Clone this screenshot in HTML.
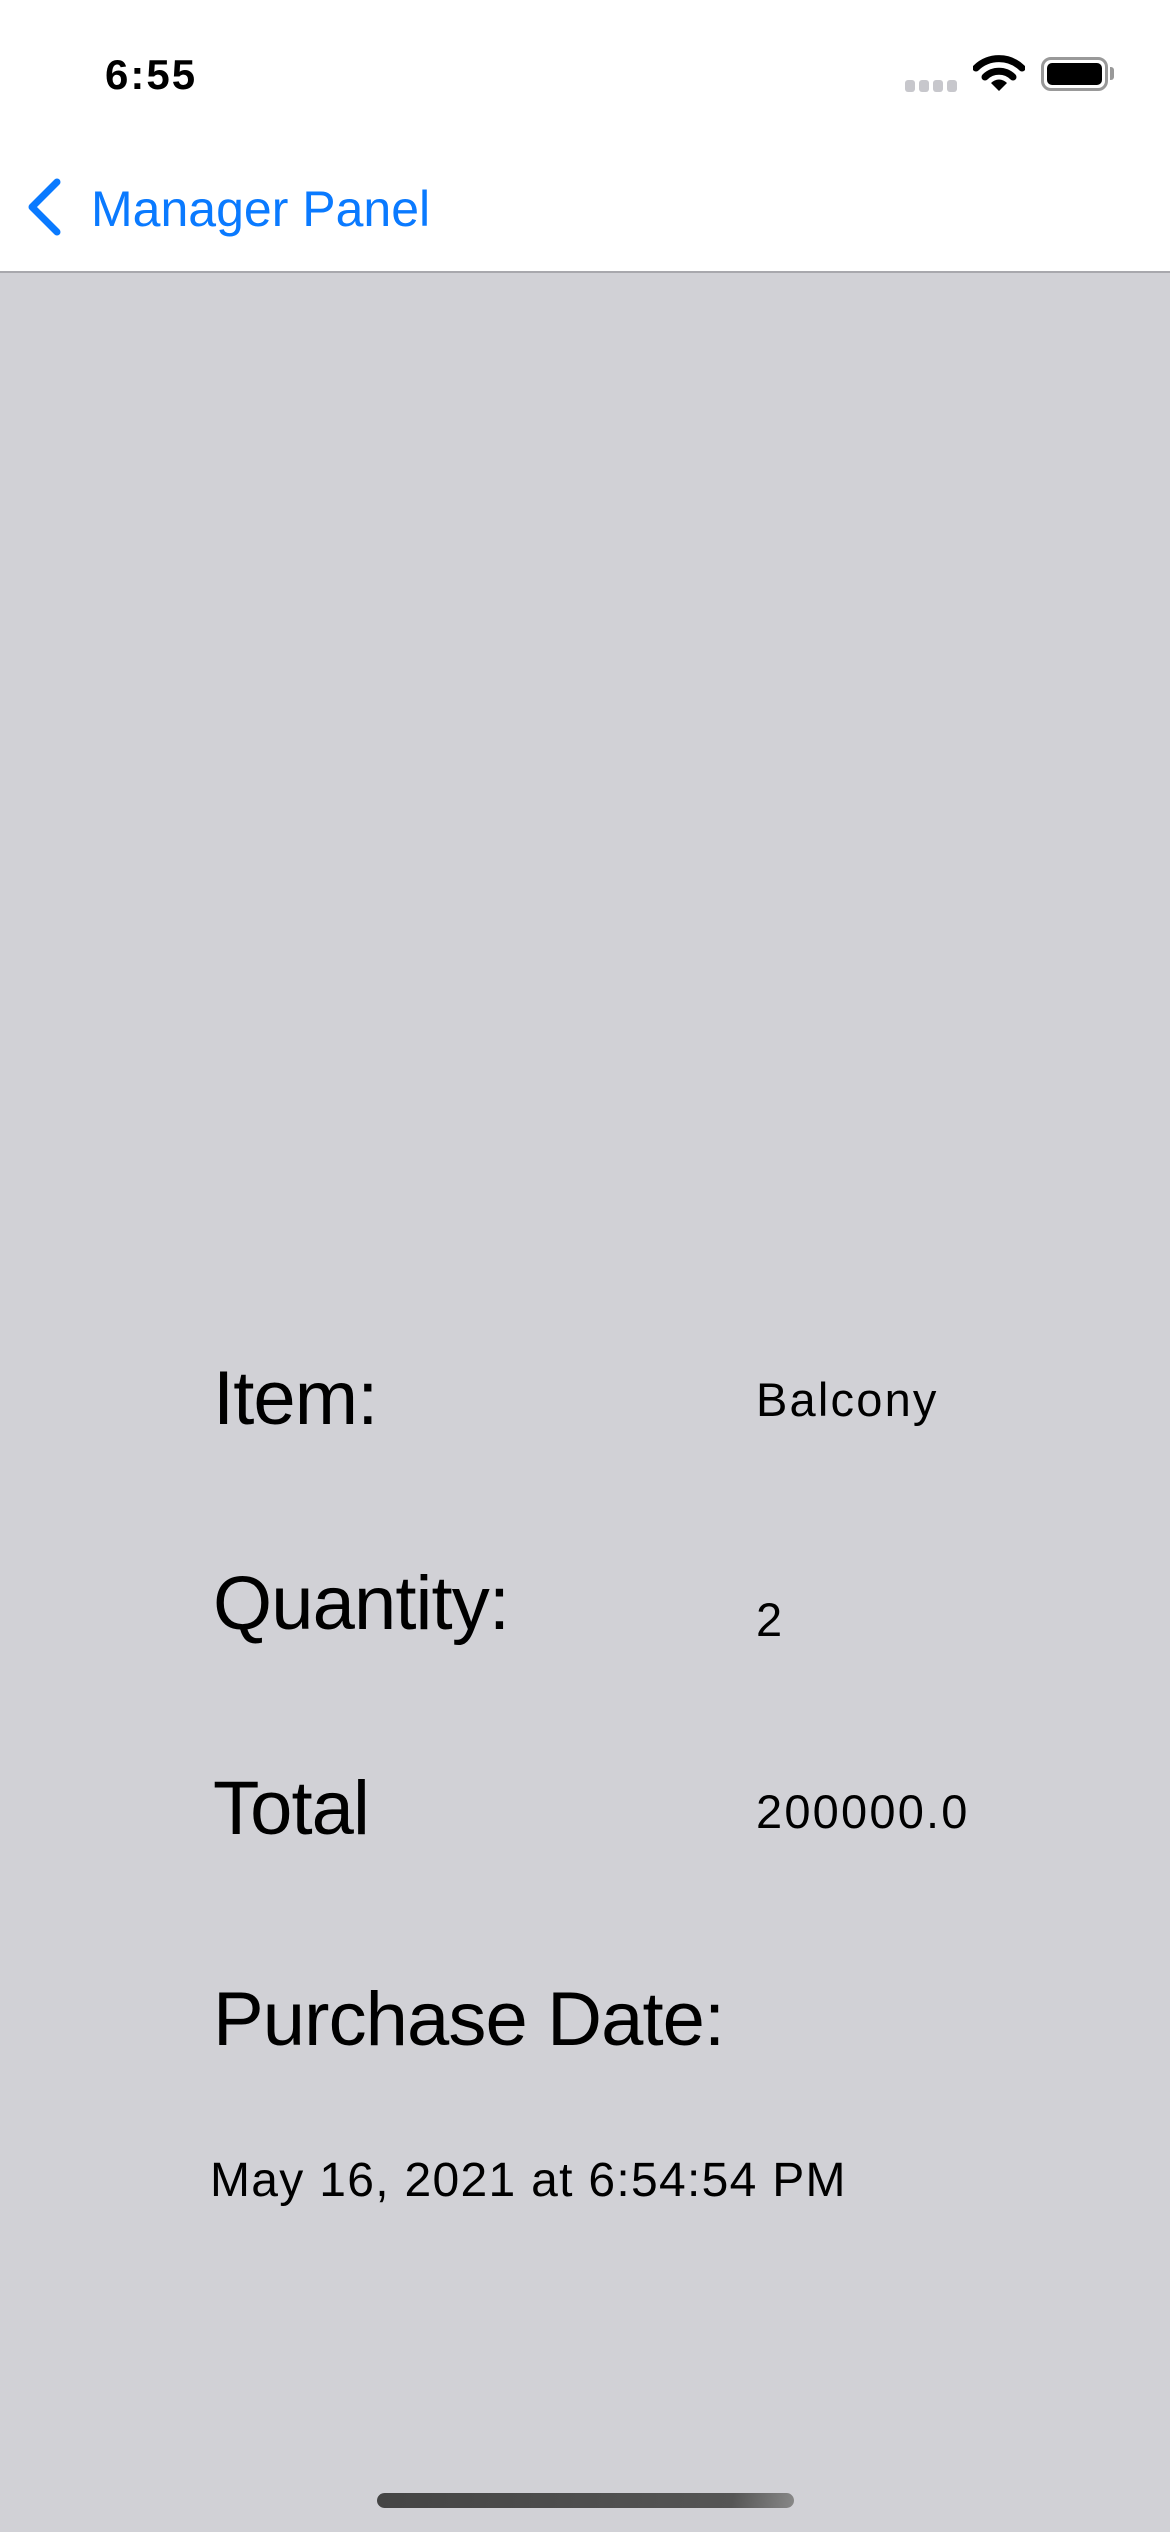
<!DOCTYPE html>
<html><head><meta charset="utf-8"><style>
*{margin:0;padding:0;box-sizing:border-box}
html,body{width:1170px;height:2532px;overflow:hidden;background:#d1d1d6;font-family:"Liberation Sans",sans-serif;color:#000}
.t{position:absolute;line-height:1;white-space:nowrap}
#hdr{position:absolute;left:0;top:0;width:1170px;height:273px;background:#fff;border-bottom:2px solid #a8a8ad}
.lbl{font-size:76px;letter-spacing:-0.9px;left:213px}
.val{font-size:47px;left:756px;letter-spacing:2.2px}
</style></head><body>
<div id="hdr">
  <div class="t" style="left:105px;top:54px;font-size:42px;font-weight:bold;letter-spacing:2px">6:55</div>
  <svg style="position:absolute;left:905px;top:80px" width="56" height="13"><g fill="#c7c7cc"><rect x="0" y="0" width="10" height="12" rx="3"/><rect x="14" y="0" width="10" height="12" rx="3"/><rect x="28" y="0" width="10" height="12" rx="3"/><rect x="42" y="0" width="10" height="12" rx="3"/></g></svg>
  <svg style="position:absolute;left:973px;top:54px" width="52" height="38" viewBox="0 0 52 38"><path d="M3 14 A33 33 0 0 1 49 14" stroke="#000" stroke-width="7" fill="none" stroke-linecap="round"/><path d="M12 23 A20 20 0 0 1 40 23" stroke="#000" stroke-width="7" fill="none" stroke-linecap="round"/><path d="M26 37 L18 29 A11 11 0 0 1 34 29 Z" fill="#000"/></svg>
  <div style="position:absolute;left:1041px;top:57px;width:67px;height:34px;border:3px solid #999;border-radius:10px;padding:3px"><div style="width:100%;height:100%;background:#000;border-radius:5px"></div></div>
  <div style="position:absolute;left:1110px;top:67px;width:4px;height:13px;background:#999;border-radius:0 3px 3px 0"></div>
  <svg style="position:absolute;left:24px;top:178px" width="40" height="58" viewBox="0 0 40 58"><path d="M33 4 L8 29 L33 54" stroke="#0a7aff" stroke-width="7" fill="none" stroke-linecap="round" stroke-linejoin="round"/></svg>
  <div class="t" style="left:91px;top:184px;font-size:50px;color:#0a7aff">Manager Panel</div>
</div>
<div class="t lbl" style="top:1361px">Item:</div>
<div class="t val" style="top:1376px">Balcony</div>
<div class="t lbl" style="top:1566px">Quantity:</div>
<div class="t val" style="top:1596px">2</div>
<div class="t lbl" style="top:1771px">Total</div>
<div class="t val" style="top:1788px">200000.0</div>
<div class="t lbl" style="top:1982px">Purchase Date:</div>
<div class="t" style="left:210px;top:2157px;font-size:48px;letter-spacing:1.3px">May 16, 2021 at 6:54:54 PM</div>
<div style="position:absolute;left:377px;top:2493px;width:417px;height:15px;border-radius:8px;background:linear-gradient(100deg,#444 0%,#555 85%,#888 100%)"></div>
</body></html>
